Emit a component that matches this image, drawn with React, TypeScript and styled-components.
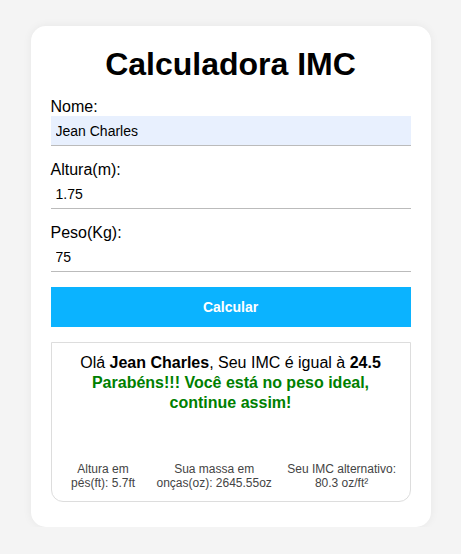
import React, { useState } from "react";
import styled, { createGlobalStyle } from "styled-components";

const Global = createGlobalStyle`
  html, body { margin: 0; padding: 0; }
  body {
    background: #f4f4f4;
    font-family: "Liberation Sans", Arial, sans-serif;
    color: #000;
  }
`;

const Page = styled.div`
  display: flex;
  justify-content: center;
  padding-top: 26px;
`;

const Card = styled.div`
  width: 400px;
  box-sizing: border-box;
  background: #fff;
  border-radius: 15px;
  padding: 20px 20px 25px;
  box-shadow: 0 0 10px rgba(0, 0, 0, 0.06);
  display: flex;
  flex-direction: column;
`;

const Title = styled.h1`
  margin: 0 0 15px;
  font-size: 32px;
  line-height: 37px;
  font-weight: 700;
  text-align: center;
`;

const Field = styled.div`
  display: flex;
  flex-direction: column;
  margin-bottom: 15px;
`;

const Label = styled.label`
  font-size: 16px;
  line-height: 18px;
`;

const Input = styled.input<{ $filled?: boolean }>`
  height: 30px;
  box-sizing: border-box;
  border: none;
  border-bottom: 1px solid #bbb;
  background: ${(p) => (p.$filled ? "#e8f0fe" : "#fff")};
  font-family: "Liberation Sans", Arial, sans-serif;
  font-size: 14px;
  color: #000;
  padding: 0 5px;
  outline: none;
`;

const Button = styled.button`
  height: 40px;
  border: none;
  background: #0bb3ff;
  color: #fff;
  font-family: "Liberation Sans", Arial, sans-serif;
  font-size: 14px;
  font-weight: 700;
  cursor: pointer;
  margin-bottom: 15px;
`;

const Result = styled.div`
  border: 1px solid #ddd;
  border-radius: 0 0 12px 12px;
  padding: 10px 10px 11px;
  min-height: 160px;
  box-sizing: border-box;
  display: flex;
  flex-direction: column;
  justify-content: space-between;
  text-align: center;
`;

const Greeting = styled.p`
  margin: 0;
  font-size: 16px;
  line-height: 20px;
`;

const Message = styled.p`
  margin: 0;
  font-size: 16px;
  line-height: 20px;
  font-weight: 700;
  color: #008000;
`;

const Stats = styled.div`
  display: flex;
`;

const Stat = styled.div`
  font-size: 12px;
  line-height: 14px;
  color: #444;
  text-align: center;
`;

export default function App() {
  const [nome, setNome] = useState("Jean Charles");
  const [altura, setAltura] = useState("1.75");
  const [peso, setPeso] = useState("75");
  return (
    <>
      <Global />
      <Page>
        <Card>
          <Title>Calculadora IMC</Title>
          <Field>
            <Label>Nome:</Label>
            <Input $filled value={nome} onChange={(e) => setNome(e.target.value)} />
          </Field>
          <Field>
            <Label>Altura(m):</Label>
            <Input value={altura} onChange={(e) => setAltura(e.target.value)} />
          </Field>
          <Field>
            <Label>Peso(Kg):</Label>
            <Input value={peso} onChange={(e) => setPeso(e.target.value)} />
          </Field>
          <Button>Calcular</Button>
          <Result>
            <div>
              <Greeting>
                Olá <b>Jean Charles</b>, Seu IMC é igual à <b>24.5</b>
              </Greeting>
              <Message>Parabéns!!! Você está no peso ideal, continue assim!</Message>
            </div>
            <Stats>
              <Stat>Altura em pés(ft): 5.7ft</Stat>
              <Stat>Sua massa em onças(oz): 2645.55oz</Stat>
              <Stat>Seu IMC alternativo: 80.3 oz/ft²</Stat>
            </Stats>
          </Result>
        </Card>
      </Page>
    </>
  );
}
